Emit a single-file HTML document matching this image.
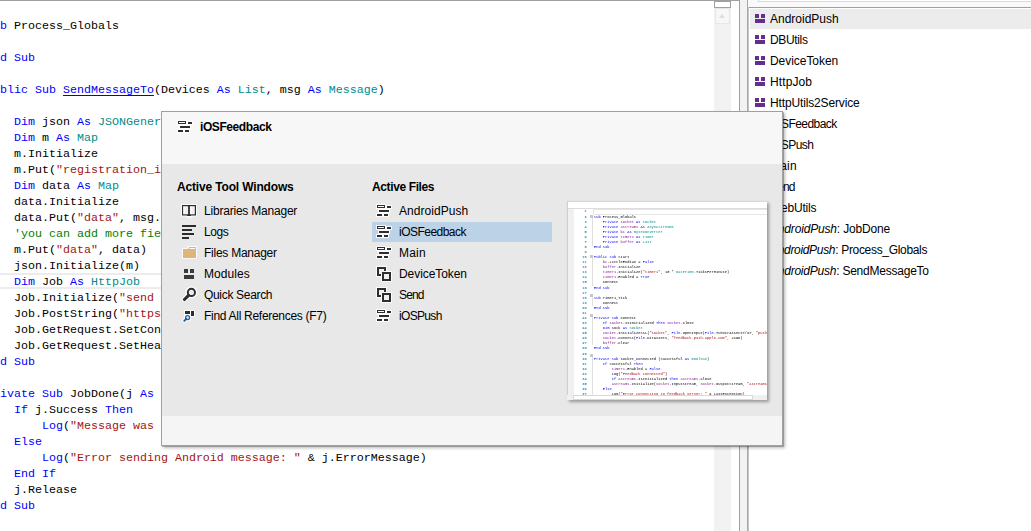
<!DOCTYPE html>
<html><head><meta charset="utf-8">
<style>
html,body{margin:0;padding:0;}
body{width:1031px;height:531px;position:relative;overflow:hidden;background:#fff;font-family:"Liberation Sans",sans-serif;}
.cl{position:absolute;left:-14px;height:16px;line-height:16px;white-space:pre;font-family:"Liberation Mono",monospace;font-size:11.67px;letter-spacing:0px;color:#000;}
.it{position:absolute;height:20px;line-height:20px;white-space:pre;font-size:12px;color:#000;}
.ic{position:absolute;}
.pl{position:absolute;left:85px;height:16px;line-height:16px;white-space:pre;font-family:"Liberation Mono",monospace;font-size:11.67px;font-weight:normal;color:#000;}
.pnum{position:absolute;left:40px;width:22px;text-align:right;height:16px;line-height:16px;font-family:"Liberation Mono",monospace;font-size:11.67px;font-weight:bold;color:#2b91af;}
</style></head><body>
<!-- editor -->
<div style="position:absolute;left:0;top:0;width:740px;height:1px;background:#a0a0a0"></div>
<div style="position:absolute;left:0;top:273px;width:714px;height:2px;background:#ececec"></div>
<div style="position:absolute;left:0;top:287px;width:714px;height:2px;background:#ececec"></div>
<div class="cl" style="top:18px"><span style="color:#0000ff">Sub</span> Process_Globals</div><div class="cl" style="top:34px"></div><div class="cl" style="top:50px"><span style="color:#0000ff">End Sub</span></div><div class="cl" style="top:66px"></div><div class="cl" style="top:82px"><span style="color:#0000ff">Public Sub</span> <span style="color:#0000f0;text-decoration:underline;text-decoration-skip-ink:none;text-underline-offset:2px">SendMessageTo</span>(Devices <span style="color:#0000ff">As</span> <span style="color:#008b8b">List</span>, msg <span style="color:#0000ff">As</span> <span style="color:#008b8b">Message</span>)</div><div class="cl" style="top:98px"></div><div class="cl" style="top:114px">    <span style="color:#0000ff">Dim</span> json <span style="color:#0000ff">As</span> <span style="color:#008b8b">JSONGenerator</span></div><div class="cl" style="top:130px">    <span style="color:#0000ff">Dim</span> m <span style="color:#0000ff">As</span> <span style="color:#008b8b">Map</span></div><div class="cl" style="top:146px">    m.Initialize</div><div class="cl" style="top:162px">    m.Put(<span style="color:#a31515">&quot;registration_ids&quot;</span>, Devices)</div><div class="cl" style="top:178px">    <span style="color:#0000ff">Dim</span> data <span style="color:#0000ff">As</span> <span style="color:#008b8b">Map</span></div><div class="cl" style="top:194px">    data.Initialize</div><div class="cl" style="top:210px">    data.Put(<span style="color:#a31515">&quot;data&quot;</span>, msg.Body)</div><div class="cl" style="top:226px">    <span style="color:#008000">&#x27;you can add more fields</span></div><div class="cl" style="top:242px">    m.Put(<span style="color:#a31515">&quot;data&quot;</span>, data)</div><div class="cl" style="top:258px">    json.Initialize(m)</div><div class="cl" style="top:274px">    <span style="color:#0000ff">Dim</span> Job <span style="color:#0000ff">As</span> <span style="color:#008b8b">HttpJob</span></div><div class="cl" style="top:290px">    Job.Initialize(<span style="color:#a31515">&quot;send message&quot;</span>, Me)</div><div class="cl" style="top:306px">    Job.PostString(<span style="color:#a31515">&quot;https fcm&quot;</span>)</div><div class="cl" style="top:322px">    Job.GetRequest.SetContentType</div><div class="cl" style="top:338px">    Job.GetRequest.SetHeader</div><div class="cl" style="top:354px"><span style="color:#0000ff">End Sub</span></div><div class="cl" style="top:370px"></div><div class="cl" style="top:386px"><span style="color:#0000ff">Private Sub</span> JobDone(j <span style="color:#0000ff">As</span> <span style="color:#008b8b">HttpJob</span>)</div><div class="cl" style="top:402px">    <span style="color:#0000ff">If</span> j.Success <span style="color:#0000ff">Then</span></div><div class="cl" style="top:418px">        <span style="color:#0000ff">Log</span>(<span style="color:#a31515">&quot;Message was sent&quot;</span>)</div><div class="cl" style="top:434px">    <span style="color:#0000ff">Else</span></div><div class="cl" style="top:450px">        <span style="color:#0000ff">Log</span>(<span style="color:#a31515">&quot;Error sending Android message: &quot;</span> &amp; j.ErrorMessage)</div><div class="cl" style="top:466px">    <span style="color:#0000ff">End If</span></div><div class="cl" style="top:482px">    j.Release</div><div class="cl" style="top:498px"><span style="color:#0000ff">End Sub</span></div>
<!-- editor vscroll -->
<div style="position:absolute;left:714px;top:8px;width:17px;height:523px;background:#f2f2f2"></div>
<div style="position:absolute;left:714px;top:1px;width:15px;height:5px;background:#fff;border:1px solid #a0a0a0"></div>
<div style="position:absolute;left:715px;top:8px;width:13px;height:14px;background:#f7f7f7;border:1px solid #e6e6e6"></div>
<div style="position:absolute;left:719px;top:14px;width:0;height:0;border-left:3.5px solid transparent;border-right:3.5px solid transparent;border-bottom:4px solid #dedede"></div>
<div style="position:absolute;left:739px;top:0;width:1px;height:531px;background:#a0a0a0"></div>
<div style="position:absolute;left:740px;top:0;width:7px;height:531px;background:#f2f2f2"></div>
<div style="position:absolute;left:747px;top:0;width:1px;height:531px;background:#a8a8a8"></div>
<!-- right panel -->
<div style="position:absolute;left:748px;top:0;width:283px;height:7px;background:#f9f9f9"></div>
<div style="position:absolute;left:758px;top:-2px;width:273px;height:2px;background:#fff;border:1px solid #d5dde8"></div>
<div style="position:absolute;left:748px;top:7px;width:283px;height:1px;background:#a0a0a0"></div>
<div style="position:absolute;left:748px;top:7px;width:1px;height:524px;background:#c4c4c4"></div>
<div style="position:absolute;left:750px;top:9px;width:281px;height:20px;background:#ececec"></div><svg class="ic" style="left:755px;top:14px" width="10" height="9" viewBox="0 0 10 9">
<g fill="#652d90"><rect x="0" y="0" width="4" height="4"/><rect x="6" y="0" width="4" height="4"/><rect x="0" y="5" width="10" height="4"/></g></svg><div class="it" style="left:770px;top:9px;letter-spacing:0px">AndroidPush</div><svg class="ic" style="left:755px;top:35px" width="10" height="9" viewBox="0 0 10 9">
<g fill="#652d90"><rect x="0" y="0" width="4" height="4"/><rect x="6" y="0" width="4" height="4"/><rect x="0" y="5" width="10" height="4"/></g></svg><div class="it" style="left:770px;top:30px;letter-spacing:-0.35px">DBUtils</div><svg class="ic" style="left:755px;top:56px" width="10" height="9" viewBox="0 0 10 9">
<g fill="#652d90"><rect x="0" y="0" width="4" height="4"/><rect x="6" y="0" width="4" height="4"/><rect x="0" y="5" width="10" height="4"/></g></svg><div class="it" style="left:770px;top:51px;letter-spacing:-0.05px">DeviceToken</div><svg class="ic" style="left:755px;top:77px" width="10" height="9" viewBox="0 0 10 9">
<g fill="#652d90"><rect x="0" y="0" width="4" height="4"/><rect x="6" y="0" width="4" height="4"/><rect x="0" y="5" width="10" height="4"/></g></svg><div class="it" style="left:770px;top:72px;letter-spacing:0.1px">HttpJob</div><svg class="ic" style="left:755px;top:98px" width="10" height="9" viewBox="0 0 10 9">
<g fill="#652d90"><rect x="0" y="0" width="4" height="4"/><rect x="6" y="0" width="4" height="4"/><rect x="0" y="5" width="10" height="4"/></g></svg><div class="it" style="left:770px;top:93px;letter-spacing:-0.14px">HttpUtils2Service</div><svg class="ic" style="left:755px;top:119px" width="10" height="9" viewBox="0 0 10 9">
<g fill="#652d90"><rect x="0" y="0" width="4" height="4"/><rect x="6" y="0" width="4" height="4"/><rect x="0" y="5" width="10" height="4"/></g></svg><div class="it" style="left:770px;top:114px;letter-spacing:-0.54px">iOSFeedback</div><svg class="ic" style="left:755px;top:140px" width="10" height="9" viewBox="0 0 10 9">
<g fill="#652d90"><rect x="0" y="0" width="4" height="4"/><rect x="6" y="0" width="4" height="4"/><rect x="0" y="5" width="10" height="4"/></g></svg><div class="it" style="left:770px;top:135px;letter-spacing:-0.57px">iOSPush</div><svg class="ic" style="left:755px;top:161px" width="10" height="9" viewBox="0 0 10 9">
<g fill="#652d90"><rect x="0" y="0" width="4" height="4"/><rect x="6" y="0" width="4" height="4"/><rect x="0" y="5" width="10" height="4"/></g></svg><div class="it" style="left:770px;top:156px;letter-spacing:0.2px">Main</div><svg class="ic" style="left:755px;top:182px" width="10" height="9" viewBox="0 0 10 9">
<g fill="#652d90"><rect x="0" y="0" width="4" height="4"/><rect x="6" y="0" width="4" height="4"/><rect x="0" y="5" width="10" height="4"/></g></svg><div class="it" style="left:770px;top:177px;letter-spacing:-0.87px">Send</div><svg class="ic" style="left:755px;top:203px" width="10" height="9" viewBox="0 0 10 9">
<g fill="#652d90"><rect x="0" y="0" width="4" height="4"/><rect x="6" y="0" width="4" height="4"/><rect x="0" y="5" width="10" height="4"/></g></svg><div class="it" style="left:770px;top:198px;letter-spacing:-0.17px">WebUtils</div><div class="it" style="left:770px;top:219px;letter-spacing:-0.17px"><i>AndroidPush</i>: JobDone</div><div class="it" style="left:770px;top:240px;letter-spacing:-0.32px"><i>AndroidPush</i>: Process_Globals</div><div class="it" style="left:770px;top:261px;letter-spacing:-0.23px"><i>AndroidPush</i>: SendMessageTo</div>
<!-- popup -->
<div style="position:absolute;left:161px;top:111px;width:620px;height:333px;border:1px solid #a0a0a0;background:#f5f5f5;box-shadow:1px 1px 0 rgba(0,0,0,0.22),2px 2px 3px rgba(0,0,0,0.28)">
  <div style="position:absolute;left:0;top:0;width:620px;height:52px;background:#f7f7f7"></div>
  <div style="position:absolute;left:0;top:52px;width:620px;height:252px;background:#e8e8e8"></div>
</div>
<svg class="ic" style="left:177px;top:120px" width="17" height="14" viewBox="0 0 17 14"><g fill="#fff" opacity="0.9"><rect x="0" y="0" width="10" height="5"/><rect x="10" y="1" width="6" height="4"/><rect x="2" y="5" width="12" height="4"/><rect x="0" y="9" width="7" height="4"/><rect x="7" y="9" width="6" height="4"/></g><g fill="#2e2e2e"><rect x="1" y="1" width="8" height="3"/><rect x="11" y="2" width="4" height="2"/><rect x="3" y="6" width="10" height="2"/><rect x="1" y="10" width="5" height="2"/><rect x="8" y="10" width="4" height="2"/></g><rect x="2" y="2" width="6" height="1" fill="#fff"/></svg>
<div class="it" style="left:200px;top:117px;font-weight:bold;letter-spacing:-0.42px">iOSFeedback</div>
<div class="it" style="left:177px;top:177px;font-weight:bold;letter-spacing:-0.16px">Active Tool Windows</div>
<div class="it" style="left:372px;top:177px;font-weight:bold;letter-spacing:-0.38px">Active Files</div>
<svg class="ic" style="left:181px;top:204px" width="16" height="14" viewBox="0 0 16 14">
<rect x="0" y="0" width="16" height="12.5" fill="#fff" opacity="0.85"/><rect x="5" y="12" width="6" height="2" fill="#fff" opacity="0.7"/>
<rect x="1.6" y="1.6" width="12.8" height="9.3" fill="#f0f0f3" stroke="#2e2e2e" stroke-width="1.2"/>
<g fill="#fff"><rect x="2.5" y="2.5" width="1" height="7.6"/><rect x="9.5" y="2.5" width="1" height="7.6"/></g>
<rect x="7.1" y="1" width="1.8" height="11" fill="#2e2e2e"/><rect x="6" y="11" width="4" height="1" fill="#2e2e2e"/></svg><svg class="ic" style="left:182px;top:225px" width="15" height="15" viewBox="0 0 15 15">
<g fill="#2b2b2b"><rect x="0" y="0" width="14" height="2"/><rect x="0" y="4" width="10" height="2"/><rect x="0" y="8" width="12" height="2"/><rect x="0" y="12" width="7" height="2"/></g></svg><svg class="ic" style="left:182px;top:246px" width="16" height="14" viewBox="0 0 16 14">
<path d="M0 2h5l1-2h9v13H0z" fill="#fff" opacity="0.8"/>
<path d="M1 3h5l1.3-2H14v11H1z" fill="#dcb67a"/><rect x="7.5" y="2" width="5.5" height="1" fill="#fff"/></svg><svg class="ic" style="left:184px;top:269px" width="11" height="10" viewBox="0 0 11 10">
<g fill="#3a3a3a"><rect x="0" y="0" width="4" height="4"/><rect x="6" y="0" width="4" height="4"/><rect x="0" y="6" width="10" height="4"/></g></svg><svg class="ic" style="left:180px;top:285px" width="20" height="18" viewBox="0 0 20 18">
<circle cx="11.4" cy="7.4" r="4.6" fill="none" stroke="#fff" stroke-width="3" opacity="0.8"/>
<path d="M8.3 10.6L4.4 14.5" stroke="#fff" stroke-width="5" stroke-linecap="round" opacity="0.8"/>
<circle cx="11.4" cy="7.4" r="3.6" fill="#ececef" stroke="#2e2e2e" stroke-width="2"/>
<path d="M8.6 10.3L4.4 14.5" stroke="#2e2e2e" stroke-width="3.1" stroke-linecap="round"/></svg><svg class="ic" style="left:180px;top:306px" width="20" height="18" viewBox="0 0 20 18">
<g fill="#fff" opacity="0.85"><rect x="4" y="4" width="7" height="5"/><rect x="10" y="4" width="5" height="7"/></g>
<circle cx="7.6" cy="11.5" r="2.3" fill="none" stroke="#fff" stroke-width="3" opacity="0.8"/>
<path d="M6 13.2L4.3 14.9" stroke="#fff" stroke-width="4" stroke-linecap="round" opacity="0.8"/>
<g fill="#2e2e2e"><rect x="5" y="5" width="5" height="3"/><rect x="11" y="5" width="3" height="5"/></g>
<circle cx="7.6" cy="11.5" r="2" fill="#ececef" stroke="#1c5fb0" stroke-width="1.25"/>
<path d="M6.3 12.9L4.3 14.9" stroke="#1c5fb0" stroke-width="2" stroke-linecap="round"/></svg>
<div class="it" style="left:204px;top:201px;letter-spacing:-0.21px">Libraries Manager</div><div class="it" style="left:204px;top:222px;letter-spacing:-0.43px">Logs</div><div class="it" style="left:204px;top:243px;letter-spacing:-0.25px">Files Manager</div><div class="it" style="left:204px;top:264px;letter-spacing:0.07px">Modules</div><div class="it" style="left:204px;top:285px;letter-spacing:-0.32px">Quick Search</div><div class="it" style="left:204px;top:306px;letter-spacing:-0.29px">Find All References (F7)</div>
<div style="position:absolute;left:372px;top:222px;width:180px;height:20px;background:#bcd2e7"></div><svg class="ic" style="left:376px;top:204px" width="17" height="14" viewBox="0 0 17 14"><g fill="#fff" opacity="0.9"><rect x="0" y="0" width="10" height="5"/><rect x="10" y="1" width="6" height="4"/><rect x="2" y="5" width="12" height="4"/><rect x="0" y="9" width="7" height="4"/><rect x="7" y="9" width="6" height="4"/></g><g fill="#2e2e2e"><rect x="1" y="1" width="8" height="3"/><rect x="11" y="2" width="4" height="2"/><rect x="3" y="6" width="10" height="2"/><rect x="1" y="10" width="5" height="2"/><rect x="8" y="10" width="4" height="2"/></g><rect x="2" y="2" width="6" height="1" fill="#fff"/></svg><div class="it" style="left:399px;top:201px;letter-spacing:0.05px">AndroidPush</div><svg class="ic" style="left:376px;top:225px" width="17" height="14" viewBox="0 0 17 14"><g fill="#fff" opacity="0.9"><rect x="0" y="0" width="10" height="5"/><rect x="10" y="1" width="6" height="4"/><rect x="2" y="5" width="12" height="4"/><rect x="0" y="9" width="7" height="4"/><rect x="7" y="9" width="6" height="4"/></g><g fill="#2e2e2e"><rect x="1" y="1" width="8" height="3"/><rect x="11" y="2" width="4" height="2"/><rect x="3" y="6" width="10" height="2"/><rect x="1" y="10" width="5" height="2"/><rect x="8" y="10" width="4" height="2"/></g><rect x="2" y="2" width="6" height="1" fill="#fff"/></svg><div class="it" style="left:399px;top:222px;letter-spacing:-0.52px">iOSFeedback</div><svg class="ic" style="left:376px;top:246px" width="17" height="14" viewBox="0 0 17 14"><g fill="#fff" opacity="0.9"><rect x="0" y="0" width="10" height="5"/><rect x="10" y="1" width="6" height="4"/><rect x="2" y="5" width="12" height="4"/><rect x="0" y="9" width="7" height="4"/><rect x="7" y="9" width="6" height="4"/></g><g fill="#2e2e2e"><rect x="1" y="1" width="8" height="3"/><rect x="11" y="2" width="4" height="2"/><rect x="3" y="6" width="10" height="2"/><rect x="1" y="10" width="5" height="2"/><rect x="8" y="10" width="4" height="2"/></g><rect x="2" y="2" width="6" height="1" fill="#fff"/></svg><div class="it" style="left:399px;top:243px;letter-spacing:0.2px">Main</div><svg class="ic" style="left:376px;top:266px" width="17" height="17" viewBox="0 0 17 17"><g fill="#fff" opacity="0.9"><rect x="0" y="0" width="11" height="11"/><rect x="5" y="5" width="11" height="11"/></g><rect x="3" y="3" width="5" height="5" fill="#efeff2"/><g fill="#2e2e2e"><rect x="1" y="1" width="9" height="2"/><rect x="1" y="1" width="2" height="9"/><rect x="8" y="1" width="2" height="4"/><rect x="1" y="8" width="4" height="2"/><rect x="6" y="6" width="9" height="2"/><rect x="6" y="13" width="9" height="2"/><rect x="6" y="6" width="2" height="9"/><rect x="13" y="6" width="2" height="9"/></g><rect x="8" y="8" width="5" height="5" fill="#efeff2"/></svg><div class="it" style="left:399px;top:264px;letter-spacing:-0.07px">DeviceToken</div><svg class="ic" style="left:376px;top:287px" width="17" height="17" viewBox="0 0 17 17"><g fill="#fff" opacity="0.9"><rect x="0" y="0" width="11" height="11"/><rect x="5" y="5" width="11" height="11"/></g><rect x="3" y="3" width="5" height="5" fill="#efeff2"/><g fill="#2e2e2e"><rect x="1" y="1" width="9" height="2"/><rect x="1" y="1" width="2" height="9"/><rect x="8" y="1" width="2" height="4"/><rect x="1" y="8" width="4" height="2"/><rect x="6" y="6" width="9" height="2"/><rect x="6" y="13" width="9" height="2"/><rect x="6" y="6" width="2" height="9"/><rect x="13" y="6" width="2" height="9"/></g><rect x="8" y="8" width="5" height="5" fill="#efeff2"/></svg><div class="it" style="left:399px;top:285px;letter-spacing:-0.87px">Send</div><svg class="ic" style="left:376px;top:309px" width="17" height="14" viewBox="0 0 17 14"><g fill="#fff" opacity="0.9"><rect x="0" y="0" width="10" height="5"/><rect x="10" y="1" width="6" height="4"/><rect x="2" y="5" width="12" height="4"/><rect x="0" y="9" width="7" height="4"/><rect x="7" y="9" width="6" height="4"/></g><g fill="#2e2e2e"><rect x="1" y="1" width="8" height="3"/><rect x="11" y="2" width="4" height="2"/><rect x="3" y="6" width="10" height="2"/><rect x="1" y="10" width="5" height="2"/><rect x="8" y="10" width="4" height="2"/></g><rect x="2" y="2" width="6" height="1" fill="#fff"/></svg><div class="it" style="left:399px;top:306px;letter-spacing:-0.67px">iOSPush</div>
<!-- preview -->
<div style="position:absolute;left:567px;top:201px;width:200px;height:199px;background:#fff;overflow:hidden;box-shadow:2px 2px 3px rgba(0,0,0,0.35)">
  <div style="position:absolute;left:0;top:0;width:200px;height:1px;background:#d8d8d8"></div>
  <div style="position:absolute;left:0;top:7px;width:200px;height:1px;background:#dcdcdc"></div>
  <div style="position:absolute;left:0;top:8px;width:7px;height:190px;background:#f0f0f0"></div>
  <div style="position:absolute;left:0;top:0;width:1px;height:199px;background:#d0d0d0"></div>
  <div style="position:absolute;left:26px;top:8px;width:180px;height:6px;border:1px solid #e6e6e6;box-sizing:border-box"></div>
  <div style="position:absolute;left:23px;top:14.0px;width:3px;height:3px;background:#c8c8c8"></div><div style="position:absolute;left:25px;top:17.0px;width:1px;height:28.3px;background:#e0e0e0"></div><div style="position:absolute;left:23px;top:53.6px;width:3px;height:3px;background:#c8c8c8"></div><div style="position:absolute;left:25px;top:56.6px;width:1px;height:28.3px;background:#e0e0e0"></div><div style="position:absolute;left:23px;top:93.3px;width:3px;height:3px;background:#c8c8c8"></div><div style="position:absolute;left:25px;top:96.3px;width:1px;height:8.4px;background:#e0e0e0"></div><div style="position:absolute;left:23px;top:113.2px;width:3px;height:3px;background:#c8c8c8"></div><div style="position:absolute;left:25px;top:116.2px;width:1px;height:28.3px;background:#e0e0e0"></div><div style="position:absolute;left:23px;top:152.8px;width:3px;height:3px;background:#c8c8c8"></div><div style="position:absolute;left:25px;top:155.8px;width:1px;height:38.2px;background:#e0e0e0"></div>
  <div style="position:absolute;left:0;top:8px;width:700px;height:640px;transform:scale(0.317);transform-origin:0 0;"><div class="pl" style="top:0px"></div><div class="pnum" style="top:0px">1</div><div class="pl" style="top:16px"><span style="color:#0000ff">Sub</span> Process_Globals</div><div class="pnum" style="top:16px">2</div><div class="pl" style="top:32px">    <span style="color:#0000ff">Private</span> <span style="color:#8a1a9a">socket</span> <span style="color:#0000ff">As</span> <span style="color:#008b8b">Socket</span></div><div class="pnum" style="top:32px">3</div><div class="pl" style="top:48px">    <span style="color:#0000ff">Private</span> <span style="color:#8a1a9a">astreams</span> <span style="color:#0000ff">As</span> <span style="color:#008b8b">AsyncStreams</span></div><div class="pnum" style="top:48px">4</div><div class="pl" style="top:64px">    <span style="color:#0000ff">Private</span> <span style="color:#8a1a9a">bc</span> <span style="color:#0000ff">As</span> <span style="color:#008b8b">ByteConverter</span></div><div class="pnum" style="top:64px">5</div><div class="pl" style="top:80px">    <span style="color:#0000ff">Private</span> <span style="color:#8a1a9a">timer1</span> <span style="color:#0000ff">As</span> <span style="color:#008b8b">Timer</span></div><div class="pnum" style="top:80px">6</div><div class="pl" style="top:96px">    <span style="color:#0000ff">Private</span> <span style="color:#8a1a9a">buffer</span> <span style="color:#0000ff">As</span> <span style="color:#008b8b">List</span></div><div class="pnum" style="top:96px">7</div><div class="pl" style="top:112px"><span style="color:#0000ff">End Sub</span></div><div class="pnum" style="top:112px">8</div><div class="pl" style="top:128px"></div><div class="pnum" style="top:128px">9</div><div class="pl" style="top:144px"><span style="color:#0000ff">Public Sub</span> Start</div><div class="pnum" style="top:144px">10</div><div class="pl" style="top:160px">    <span style="color:#8a1a9a">bc</span>.LittleEndian = <span style="color:#0000ff">False</span></div><div class="pnum" style="top:160px">11</div><div class="pl" style="top:176px">    <span style="color:#8a1a9a">buffer</span>.Initialize</div><div class="pnum" style="top:176px">12</div><div class="pl" style="top:192px">    <span style="color:#8a1a9a">timer1</span>.Initialize(<span style="color:#a31515">&quot;timer1&quot;</span>, 10 * <span style="color:#008b8b">DateTime</span>.TicksPerMinute)</div><div class="pnum" style="top:192px">13</div><div class="pl" style="top:208px">    <span style="color:#8a1a9a">timer1</span>.Enabled = <span style="color:#0000ff">True</span></div><div class="pnum" style="top:208px">14</div><div class="pl" style="top:224px">    Connect</div><div class="pnum" style="top:224px">15</div><div class="pl" style="top:240px"><span style="color:#0000ff">End Sub</span></div><div class="pnum" style="top:240px">16</div><div class="pl" style="top:256px"></div><div class="pnum" style="top:256px">17</div><div class="pl" style="top:272px"><span style="color:#0000ff">Sub</span> Timer1_Tick</div><div class="pnum" style="top:272px">18</div><div class="pl" style="top:288px">    Connect</div><div class="pnum" style="top:288px">19</div><div class="pl" style="top:304px"><span style="color:#0000ff">End Sub</span></div><div class="pnum" style="top:304px">20</div><div class="pl" style="top:320px"></div><div class="pnum" style="top:320px">21</div><div class="pl" style="top:336px"><span style="color:#0000ff">Private Sub</span> Connect</div><div class="pnum" style="top:336px">22</div><div class="pl" style="top:352px">    <span style="color:#0000ff">If</span> <span style="color:#8a1a9a">socket</span>.IsInitialized <span style="color:#0000ff">Then</span> <span style="color:#8a1a9a">socket</span>.Close</div><div class="pnum" style="top:352px">23</div><div class="pl" style="top:368px">    <span style="color:#0000ff">Dim</span> sock <span style="color:#0000ff">As</span> <span style="color:#008b8b">Socket</span></div><div class="pnum" style="top:368px">24</div><div class="pl" style="top:384px">    <span style="color:#8a1a9a">socket</span>.InitializeSSL(<span style="color:#a31515">&quot;socket&quot;</span>, <span style="color:#0000ff">File</span>.OpenInput(<span style="color:#0000ff">File</span>.&lt;u&gt;DirAssets&lt;/u&gt;, <span style="color:#a31515">&quot;push.p12&quot;</span>), <span style="color:#a31515">&quot;password&quot;</span>)</div><div class="pnum" style="top:384px">25</div><div class="pl" style="top:400px">    <span style="color:#8a1a9a">socket</span>.Connect(<span style="color:#0000ff">File</span>.DirAssets, <span style="color:#a31515">&quot;feedback.push.apple.com&quot;</span>, 2196)</div><div class="pnum" style="top:400px">26</div><div class="pl" style="top:416px">    <span style="color:#8a1a9a">buffer</span>.Clear</div><div class="pnum" style="top:416px">27</div><div class="pl" style="top:432px"><span style="color:#0000ff">End Sub</span></div><div class="pnum" style="top:432px">28</div><div class="pl" style="top:448px"></div><div class="pnum" style="top:448px">29</div><div class="pl" style="top:464px"><span style="color:#0000ff">Private Sub</span> socket_Connected (Successful <span style="color:#0000ff">As</span> <span style="color:#008b8b">Boolean</span>)</div><div class="pnum" style="top:464px">30</div><div class="pl" style="top:480px">    <span style="color:#0000ff">If</span> Successful <span style="color:#0000ff">Then</span></div><div class="pnum" style="top:480px">31</div><div class="pl" style="top:496px">        <span style="color:#8a1a9a">timer1</span>.Enabled = <span style="color:#0000ff">False</span></div><div class="pnum" style="top:496px">32</div><div class="pl" style="top:512px">        Log(<span style="color:#a31515">&quot;Feedback connected&quot;</span>)</div><div class="pnum" style="top:512px">33</div><div class="pl" style="top:528px">        <span style="color:#0000ff">If</span> <span style="color:#8a1a9a">astreams</span>.IsInitialized <span style="color:#0000ff">Then</span> <span style="color:#8a1a9a">astreams</span>.Close</div><div class="pnum" style="top:528px">34</div><div class="pl" style="top:544px">        <span style="color:#8a1a9a">astreams</span>.Initialize(<span style="color:#8a1a9a">socket</span>.InputStream, <span style="color:#8a1a9a">socket</span>.OutputStream, <span style="color:#a31515">&quot;astreams&quot;</span>)</div><div class="pnum" style="top:544px">35</div><div class="pl" style="top:560px">    <span style="color:#0000ff">Else</span></div><div class="pnum" style="top:560px">36</div><div class="pl" style="top:576px">        Log(<span style="color:#a31515">&quot;Error connecting to feedback server: &quot;</span> &amp; LastException)</div><div class="pnum" style="top:576px">37</div></div>
  <div style="position:absolute;left:0;top:194px;width:200px;height:5px;background:#f0f0f0"></div>
  <div style="position:absolute;left:6px;top:194px;width:180px;height:5px;background:#fff;border:1px solid #d8d8d8;box-sizing:border-box"></div>
</div>
</body></html>
